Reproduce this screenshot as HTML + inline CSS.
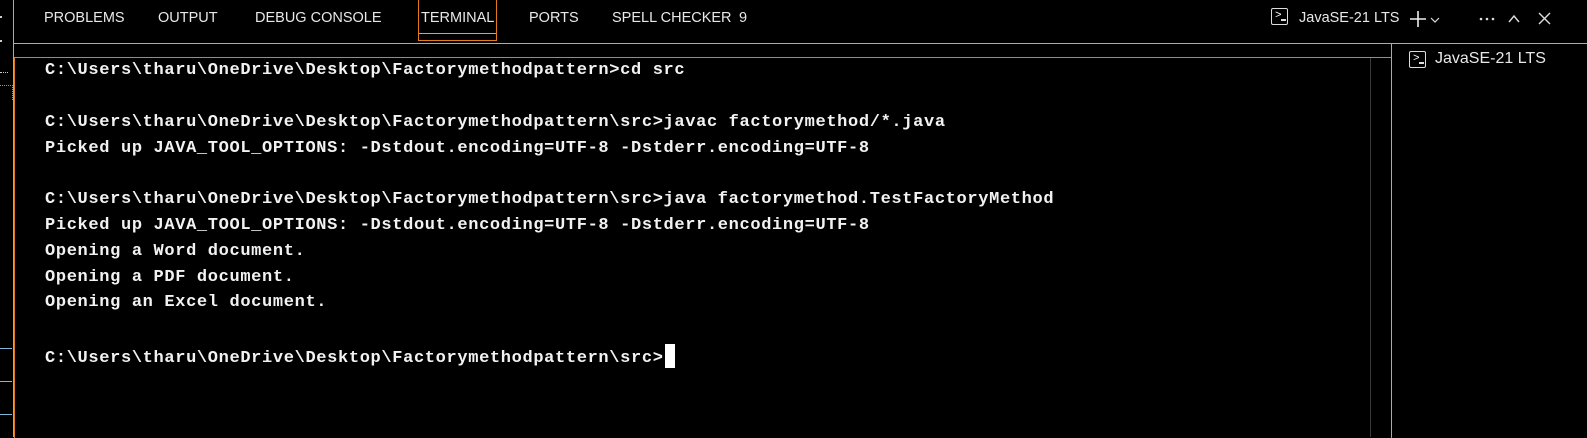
<!DOCTYPE html>
<html><head><style>
body{margin:0;width:1587px;height:437px;background:#000;position:relative;overflow:hidden;font-family:"Liberation Sans",sans-serif;color:#fff}
.a{position:absolute}
.tab{position:absolute;top:10px;font-size:14.5px;color:#e8e8e8;white-space:nowrap}
.t{position:absolute;left:45px;font-family:"Liberation Mono",monospace;font-size:17px;letter-spacing:0.65px;color:#f2f2f2;white-space:pre;font-weight:bold}
.ic{position:absolute;width:15px;height:15px;border:1.5px solid #ddd;border-radius:2px}
.cur{display:inline-block;width:10px;height:24px;background:#fff;vertical-align:-6px;margin-left:1px}
</style></head><body>
<div class="a" style="left:13px;top:0;width:1px;height:437px;background:#7fb8d8"></div>
<div class="a" style="left:13px;top:43px;width:1574px;height:1px;background:#7fb8d8"></div>
<div class="a" style="left:14px;top:57px;width:1376px;height:380px;border-top:1px solid #e07a1a;border-left:1px solid #e07a1a;border-right:1px solid #e07a1a"></div>
<div class="a" style="left:1370px;top:58px;width:1px;height:379px;background:#3a3a3a"></div>
<div class="a" style="left:1391px;top:43px;width:1px;height:394px;background:#7fb8d8"></div>
<div class="a" style="left:0;top:348px;width:12px;height:1px;background:#7fb8d8"></div>
<div class="a" style="left:0;top:381px;width:12px;height:1px;background:#7fb8d8"></div>
<div class="a" style="left:0;top:414px;width:12px;height:1px;background:#7fb8d8"></div>
<div class="a" style="left:0;top:16px;width:2px;height:2px;background:#ccc"></div>
<div class="a" style="left:0;top:40px;width:2px;height:2px;background:#ccc"></div>
<div class="a" style="left:0;top:72px;width:8px;height:2px;border-top:1px dotted #ccc"></div>
<div class="a" style="left:0;top:85px;width:12px;height:14px;border-top:1px dotted #e07a1a;border-right:1px dotted #e07a1a"></div>

<div class="tab" style="left:44px">PROBLEMS</div>
<div class="tab" style="left:158px">OUTPUT</div>
<div class="tab" style="left:255px">DEBUG CONSOLE</div>
<div class="tab" style="left:421px">TERMINAL</div>
<div class="a" style="left:418px;top:0;width:77px;height:40px;border:1px solid #e07a1a;border-top:none"></div>
<div class="a" style="left:419px;top:33px;width:77px;height:1px;background:#7fb8d8"></div>
<div class="tab" style="left:529px">PORTS</div>
<div class="tab" style="left:612px">SPELL CHECKER</div>
<div class="tab" style="left:739px">9</div>

<div class="ic" style="left:1271px;top:8px"></div>
<div class="a" style="left:1275px;top:10px;font-size:11px;font-family:'Liberation Mono',monospace">&gt;</div>
<div class="a" style="left:1281px;top:19px;width:5px;height:1.5px;background:#ddd"></div>
<div class="tab" style="left:1299px">JavaSE-21 LTS</div>
<svg class="a" style="left:1410px;top:6px" width="160" height="26" viewBox="0 0 160 26">
<path d="M8 5V21M0 13H16" stroke="#eee" stroke-width="1.6"/>
<path d="M21 12L25 16L29 12" stroke="#ddd" fill="none" stroke-width="1.2"/>
<circle cx="71" cy="13" r="1.3" fill="#ddd"/><circle cx="77" cy="13" r="1.3" fill="#ddd"/><circle cx="83" cy="13" r="1.3" fill="#ddd"/>
<path d="M99 16L104 10L109 16" stroke="#ddd" fill="none" stroke-width="1.4"/>
<path d="M129 7L140 18M140 7L129 18" stroke="#ddd" stroke-width="1.4"/>
</svg>

<div class="ic" style="left:1409px;top:51px"></div>
<div class="a" style="left:1413px;top:53px;font-size:11px;font-family:'Liberation Mono',monospace">&gt;</div>
<div class="a" style="left:1419px;top:62px;width:5px;height:1.5px;background:#ddd"></div>
<div class="a" style="left:1435px;top:50px;font-size:16px;color:#e8e8e8">JavaSE-21 LTS</div>

<div class="t" style="top:61px">C:\Users\tharu\OneDrive\Desktop\Factorymethodpattern&gt;cd src</div>
<div class="t" style="top:113px">C:\Users\tharu\OneDrive\Desktop\Factorymethodpattern\src&gt;javac factorymethod/*.java</div>
<div class="t" style="top:139px">Picked up JAVA_TOOL_OPTIONS: -Dstdout.encoding=UTF-8 -Dstderr.encoding=UTF-8</div>
<div class="t" style="top:190px">C:\Users\tharu\OneDrive\Desktop\Factorymethodpattern\src&gt;java factorymethod.TestFactoryMethod</div>
<div class="t" style="top:216px">Picked up JAVA_TOOL_OPTIONS: -Dstdout.encoding=UTF-8 -Dstderr.encoding=UTF-8</div>
<div class="t" style="top:242px">Opening a Word document.</div>
<div class="t" style="top:268px">Opening a PDF document.</div>
<div class="t" style="top:293px">Opening an Excel document.</div>
<div class="t" style="top:344px">C:\Users\tharu\OneDrive\Desktop\Factorymethodpattern\src&gt;<span class="cur"></span></div>
</body></html>
